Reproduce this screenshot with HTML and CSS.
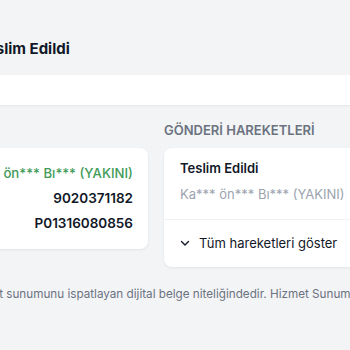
FILE: index.html
```html
<!DOCTYPE html>
<html lang="tr">
<head>
<meta charset="utf-8">
<link rel="stylesheet" href="styles.css">
</head>
<body>
<div class="page">
  <header class="top">
    <h1 class="status-title">Teslim Edildi</h1>
  </header>
  <nav class="band"></nav>
  <main class="content">
    <section class="col col-left">
      <h2 class="sec-title">TESLİMAT BİLGİLERİ</h2>
      <div class="card info">
        <div class="info-row green"><span>Ka*** ön*** Bı*** (YAKINI)</span></div>
        <div class="info-row"><span>9020371182</span></div>
        <div class="info-row"><span>P01316080856</span></div>
      </div>
    </section>
    <section class="col col-right">
      <h2 class="sec-title">GÖNDERİ HAREKETLERİ</h2>
      <div class="card moves">
        <div class="move">
          <div class="move-title">Teslim Edildi</div>
          <div class="move-sub">Ka*** ön*** Bı*** (YAKINI)</div>
        </div>
        <div class="toggle">
          <svg class="chev" width="10" height="10" viewBox="0 0 10 10"><path d="M1.5 3.5 L5 7 L8.5 3.5" fill="none" stroke="#111827" stroke-width="1.4" stroke-linecap="round" stroke-linejoin="round"/></svg>
          <span>Tüm hareketleri göster</span>
        </div>
      </div>
    </section>
  </main>
  <p class="note">Bu belge hizmet sunumunu ispatlayan dijital belge niteliğindedir. Hizmet Sunumunu Gösteren Belge</p>
</div>
</body>
</html>
```
FILE: styles.css
```css
html, body {
  margin: 0;
  padding: 0;
  overflow: hidden;
  background: #f3f4f6;
}
body {
  font-family: Inter, "Noto Sans", sans-serif;
  color: #111827;
}
.page {
  width: 700px;
}
.top {
  height: 75px;
  box-sizing: border-box;
  padding-top: 39px;
}
.status-title {
  margin: 0 0 0 -22px;
  font-size: 15px;
  line-height: 20px;
  font-weight: 700;
  color: #111827;
}
.band {
  height: 30px;
  background: #fff;
  box-shadow: 0 1px 2px rgba(0,0,0,0.06);
}
.content {
  display: grid;
  grid-template-columns: 172px 1fr;
  column-gap: 16px;
  margin-left: -24px;
  padding-top: 17px;
}
.sec-title {
  margin: 0 0 10px;
  font-size: 13px;
  line-height: 16px;
  font-weight: 600;
  color: #6b7280;
  white-space: nowrap;
}
.col-left .sec-title {
  visibility: hidden;
}
.card {
  background: #fff;
  border-radius: 8px;
  box-shadow: 0 1px 3px rgba(0,0,0,0.07);
}
.info {
  padding: 15px 15px 16px;
  display: flex;
  flex-direction: column;
  gap: 5px;
  overflow: hidden;
}
.info-row {
  display: flex;
  justify-content: flex-end;
  white-space: nowrap;
  font-size: 13.5px;
  line-height: 20px;
  font-weight: 600;
}
.info-row > span {
  flex: none;
}
.info-row.green {
  color: #3f9b58;
  font-size: 13.2px;
  font-weight: 500;
}
.move {
  padding: 10px 16px 15px;
  border-bottom: 1px solid #f1f2f4;
  display: flex;
  flex-direction: column;
  gap: 6px;
}
.move-title {
  font-size: 13px;
  line-height: 20px;
  font-weight: 600;
}
.move-sub {
  font-size: 13px;
  line-height: 20px;
  color: #9ca3af;
  white-space: nowrap;
}
.toggle {
  display: flex;
  align-items: center;
  gap: 9px;
  padding: 13px 16px 14px;
  font-size: 13px;
  line-height: 20px;
}
.chev {
  display: block;
}
.note {
  margin: 17px 0 0 -86px;
  font-size: 11.7px;
  line-height: 20px;
  color: #6b7280;
  white-space: nowrap;
}
```
